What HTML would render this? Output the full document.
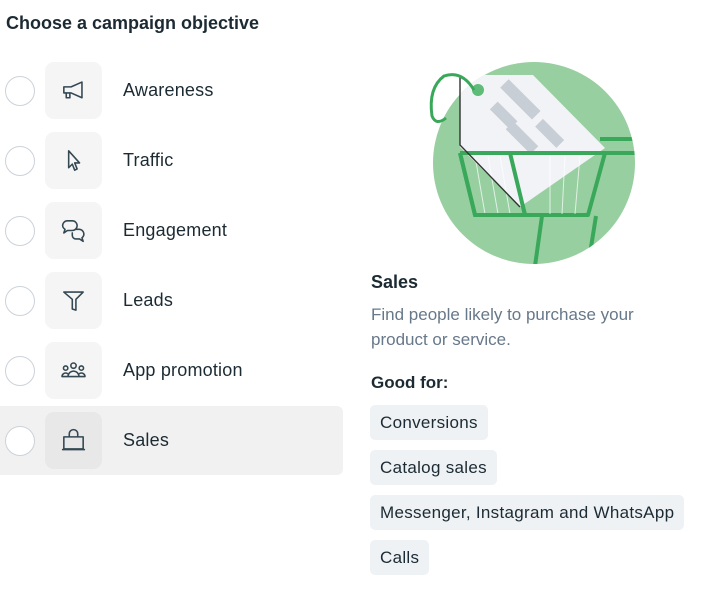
<!DOCTYPE html>
<html><head><style>
*{margin:0;padding:0;box-sizing:border-box}
body{width:708px;height:591px;background:#fff;font-family:"Liberation Sans",sans-serif;color:#1c2b33;position:relative;overflow:hidden}
.h{position:absolute;left:6px;top:13px;font-size:18px;font-weight:bold}
.row{position:absolute;left:0;width:343px;height:69px}
.row.sel{background:#f1f1f1;border-radius:0 6px 6px 0}
.rad{position:absolute;left:5px;top:20px;width:30px;height:30px;border-radius:50%;border:1px solid #cbd2d9;background:#fff}
.ib{position:absolute;left:45px;top:6px;width:57px;height:57px;border-radius:9px;background:#f5f5f5}
.ib svg{position:absolute;left:14px;top:14px;width:29px;height:29px;fill:none;stroke:#344854;stroke-width:1.3;stroke-linejoin:round;stroke-linecap:round}
.sel .ib{background:#e8e8e8}
.lb{position:absolute;left:123px;top:24px;font-size:18px;letter-spacing:0.2px}
.t{position:absolute;left:371px}
.chip{position:absolute;left:370px;height:35px;padding:0 10px;background:#eef2f5;border-radius:5px;font-size:17px;line-height:35px;letter-spacing:0.3px}
</style></head><body>
<div class="h">Choose a campaign objective</div>

<div class="row" style="top:56px"><div class="rad"></div><div class="ib"><svg viewBox="0 0 24 24"><path d="M4 9h6l9-4v13l-9-4H4z M6 14v4h3v-4"/></svg></div><div class="lb">Awareness</div></div>
<div class="row" style="top:126px"><div class="rad"></div><div class="ib"><svg viewBox="0 0 24 24"><path d="M8 4v14l3-3 2 5 2-1-2-5h4z"/></svg></div><div class="lb">Traffic</div></div>
<div class="row" style="top:196px"><div class="rad"></div><div class="ib"><svg viewBox="0 0 24 24"><path d="M3 8a4 4 0 0 1 4-4h4a4 4 0 0 1 0 8H7l-3 2 1-3A4 4 0 0 1 3 8z M14 11h3a4 4 0 0 1 3 6l-1 1 1 3-3-2h-3a3 3 0 0 1-3-3v-2"/></svg></div><div class="lb">Engagement</div></div>
<div class="row" style="top:266px"><div class="rad"></div><div class="ib"><svg viewBox="0 0 24 24"><path d="M4 5h16l-6 6v9l-3-1v-8z"/></svg></div><div class="lb">Leads</div></div>
<div class="row" style="top:336px"><div class="rad"></div><div class="ib"><svg viewBox="0 0 24 24"><circle cx="12" cy="8" r="2.2"/><circle cx="5.5" cy="10" r="1.8"/><circle cx="18.5" cy="10" r="1.8"/><path d="M7.5 17a4.5 4.5 0 0 1 9 0z M2.5 17a3 3 0 0 1 4.5-2.5 M21.5 17a3 3 0 0 0-4.5-2.5 M2.5 17h19"/></svg></div><div class="lb">App promotion</div></div>
<div class="row sel" style="top:406px"><div class="rad"></div><div class="ib"><svg viewBox="0 0 24 24"><path d="M4 9h16v10H4z M8.5 9V6.5a3.5 3.5 0 0 1 7 0V9 M3 19.5h18"/></svg></div><div class="lb">Sales</div></div>

<svg style="position:absolute;left:420px;top:50px" width="230" height="220" viewBox="0 0 230 220">
<defs><clipPath id="c"><circle cx="114" cy="113" r="101"/></clipPath></defs>
<circle cx="114" cy="113" r="101" fill="#97cfa0"/>
<g clip-path="url(#c)" stroke="#3aa85a" stroke-width="4" fill="none" stroke-linejoin="round">
<path d="M180 89h50 M40 103h175 M40 103l15 62h113l17-62 M90 103l15 62 M122 166l-7 50 M176 166l-8 50"/>
</g>
<g clip-path="url(#c)">
<path d="M40 25h73l72 73-85 59-60-60z" fill="#f1f3f6"/>
<g fill="#c8ced6"><rect x="70" y="60" width="28" height="11" transform="rotate(45 84 65)"/><rect x="78" y="43" width="45" height="12" transform="rotate(45 100 49)"/><rect x="85" y="82" width="35" height="11" transform="rotate(45 102 87)"/><rect x="115" y="78" width="30" height="11" transform="rotate(45 130 83)"/></g>
<g stroke="#fff" stroke-width="1" opacity=".7"><path d="M55 106l10 58 M68 106l10 58 M80 106l10 58 M130 106l0 58 M145 106l-3 58 M160 106l-5 58"/></g>
<g stroke="#3aa85a" stroke-width="4" fill="none"><path d="M40 103h145 M40 103l15 62h50 M90 103l15 62"/></g>
</g>
<path d="M40 25v70l60 62" stroke="#333" stroke-width="1.4" fill="none"/>
<circle cx="58" cy="40" r="6" fill="#5fbb78"/>
<path d="M54 40q-12-20-30-14-16 12-12 40 4 10 14 2" stroke="#3aa85a" stroke-width="3" fill="none"/>
</svg>

<div class="t" style="top:272px;font-size:18px;font-weight:bold">Sales</div>
<div class="t" style="top:302px;font-size:17px;line-height:25px;color:#67788a">Find people likely to purchase your<br>product or service.</div>
<div class="t" style="top:373px;font-size:17px;font-weight:bold">Good for:</div>
<div class="chip" style="top:405px">Conversions</div>
<div class="chip" style="top:450px">Catalog sales</div>
<div class="chip" style="top:495px">Messenger, Instagram and WhatsApp</div>
<div class="chip" style="top:540px">Calls</div>
</body></html>
